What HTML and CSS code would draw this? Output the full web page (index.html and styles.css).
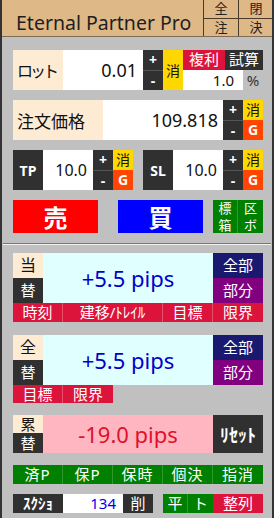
FILE: index.html
```html
<!DOCTYPE html>
<html lang="ja">
  <head>
    <meta charset="UTF-8" />
    <meta name="viewport" content="width=device-width, initial-scale=1.0" />
    <title>Eternal Partner Pro</title>
    <link rel="stylesheet" href="styles.css">
  </head>
  <body>
    <div class="panel">
      <!-- タイトル -->
      <div class="head">
        <div class="head_title">Eternal Partner Pro</div>
        <div class="head_menu">
          <span>全</span><span>閉</span><span>注</span><span>決</span>
        </div>
      </div>

      <!-- ロット -->
      <div class="row row_lot">
        <div class="label lot_label">ロット</div>
        <div class="value lot_value">0.01</div>
        <div class="pm"><span>+</span><span>-</span></div>
        <div class="clear_tall">消</div>
        <div class="lot_side">
          <div class="lot_side_top"><span class="btn_crimson">複利</span><span class="btn_dark">試算</span></div>
          <div class="lot_side_bottom"><span class="rate">1.0</span><span class="pct">%</span></div>
        </div>
      </div>

      <!-- 注文価格 -->
      <div class="row">
        <div class="label price_label">注文価格</div>
        <div class="value price_value">109.818</div>
        <div class="pm"><span>+</span><span>-</span></div>
        <div class="cg"><span class="c">消</span><span class="g">G</span></div>
      </div>

      <!-- TP / SL -->
      <div class="row row_tpsl">
        <div class="tpsl">
          <div class="tpsl_label">TP</div>
          <div class="value tpsl_value">10.0</div>
          <div class="pm"><span>+</span><span>-</span></div>
          <div class="cg"><span class="c">消</span><span class="g">G</span></div>
        </div>
        <div class="tpsl">
          <div class="tpsl_label">SL</div>
          <div class="value tpsl_value">10.0</div>
          <div class="pm"><span>+</span><span>-</span></div>
          <div class="cg"><span class="c">消</span><span class="g">G</span></div>
        </div>
      </div>

      <!-- 売買 -->
      <div class="row row_order">
        <div class="btn_sell">売</div>
        <div class="btn_buy">買</div>
        <div class="order_grid">
          <span>標</span><span>区</span><span>箱</span><span>ボ</span>
        </div>
      </div>

      <div class="divider"></div>

      <!-- 当 -->
      <div class="section sec_now">
        <div class="box">
          <div class="side"><span class="side_top">当</span><span class="side_bottom">替</span></div>
          <div class="pips pips_plus">+5.5 pips</div>
          <div class="close_col"><span class="all">全部</span><span class="part">部分</span></div>
        </div>
        <div class="red_row">
          <span class="w50">時刻</span><span class="w100">建移/ﾄﾚｲﾙ</span><span class="w50">目標</span><span class="w50">限界</span>
        </div>
      </div>

      <!-- 全 -->
      <div class="section sec_all">
        <div class="box">
          <div class="side"><span class="side_top">全</span><span class="side_bottom">替</span></div>
          <div class="pips pips_plus">+5.5 pips</div>
          <div class="close_col"><span class="all">全部</span><span class="part">部分</span></div>
        </div>
        <div class="red_row red_row_short">
          <span class="w50">目標</span><span class="w50">限界</span>
        </div>
      </div>

      <!-- 累 -->
      <div class="section sec_total">
        <div class="box box_total">
          <div class="side"><span class="side_top">累</span><span class="side_bottom">替</span></div>
          <div class="pips pips_minus">-19.0 pips</div>
          <div class="btn_reset">ﾘｾｯﾄ</div>
        </div>
      </div>

      <div class="green_row">
        <span>済P</span><span>保P</span><span>保時</span><span>個決</span><span>指消</span>
      </div>

      <div class="bottom_row">
        <span class="btn_dark shot">ｽｸｼｮ</span>
        <span class="shot_value">134</span>
        <span class="btn_dark del">削</span>
        <span class="green_btn flat">平</span>
        <span class="green_btn flat">ト</span>
        <span class="btn_crimson sort">整列</span>
      </div>
    </div>
  </body>
</html>
```

FILE: styles.css
```css
* {
  box-sizing: border-box;
}
body {
  margin: 0;
  font-family: "Noto Sans", "Noto Sans CJK JP", sans-serif;
}
span {
  display: block;
}

.panel {
  width: 274px;
  height: 518px;
  background: #c0c0c0;
  border-left: 2px solid #333;
  border-right: 2px solid #333;
  overflow: hidden;
}

/* タイトル */
.head {
  display: flex;
  height: 37px;
  background: #deb887;
  border-bottom: 1px solid #7d6c58;
}
.head_title {
  flex: 1;
  display: flex;
  align-items: center;
  padding: 8px 0 0 14px;
  font-size: 19.5px;
  color: #1e1e1e;
}
.head_menu {
  width: 69px;
  display: grid;
  grid-template-columns: 35px 34px;
  grid-template-rows: 19px 17px;
  border-left: 1px solid #4a3a2a;
}
.head_menu span {
  font-size: 13px;
  line-height: 17px;
  text-align: center;
  color: #222;
}
.head_menu span:nth-child(odd) {
  border-right: 1px solid #4a3a2a;
}
.head_menu span:nth-child(-n+2) {
  border-bottom: 1px solid #4a3a2a;
}

/* 共通の行 */
.row {
  display: flex;
  height: 40px;
  margin: 10px 0 0 11px;
  width: 250px;
}
.row_lot {
  margin-top: 13px;
}
.label {
  display: flex;
  align-items: center;
  padding-left: 4px;
  background: #fdebd3;
  color: #111;
}
.lot_label {
  width: 50px;
  font-size: 16px;
  letter-spacing: -3px;
}
.price_label {
  width: 90px;
  font-size: 17px;
}
.value {
  display: flex;
  align-items: center;
  justify-content: flex-end;
  background: #fff;
  color: #111;
}
.lot_value {
  width: 80px;
  padding-right: 6px;
  font-size: 18px;
}
.price_value {
  width: 120px;
  padding-right: 5px;
  font-size: 18px;
}

.pm {
  width: 20px;
  background: #303030;
}
.pm span {
  height: 20px;
  line-height: 19px;
  text-align: center;
  color: #fff;
  font-size: 14px;
  font-weight: bold;
}
.pm span + span {
  border-top: 1px solid #555;
}
.clear_tall {
  width: 20px;
  background: #ffd700;
  display: flex;
  align-items: center;
  justify-content: center;
  font-size: 14px;
  color: #111;
}
.cg {
  width: 20px;
}
.cg span {
  height: 20px;
  line-height: 20px;
  text-align: center;
  font-size: 14px;
}
.cg .c {
  background: #ffd700;
  color: #111;
}
.cg .g {
  background: #ff4500;
  color: #fff;
  font-weight: bold;
}

.lot_side {
  width: 80px;
}
.lot_side_top,
.lot_side_bottom {
  display: flex;
  height: 20px;
}
.btn_crimson {
  background: #dc143c;
  color: #fff;
  text-align: center;
}
.btn_dark {
  background: #303030;
  color: #fff;
  text-align: center;
}
.lot_side_top span {
  font-size: 15px;
  line-height: 19px;
}
.lot_side_top .btn_crimson {
  width: 42px;
}
.lot_side_top .btn_dark {
  width: 38px;
}
.rate {
  width: 60px;
  background: #fff;
  text-align: right;
  padding-right: 9px;
  font-size: 15px;
  line-height: 20px;
  color: #111;
}
.pct {
  width: 20px;
  text-align: center;
  font-size: 15px;
  line-height: 20px;
  color: #333;
}

/* TP SL */
.row_tpsl {
  gap: 10px;
}
.tpsl {
  display: flex;
  width: 120px;
}
.tpsl_label {
  width: 30px;
  background: #303030;
  color: #fff;
  font-size: 14px;
  font-weight: bold;
  display: flex;
  align-items: center;
  justify-content: center;
}
.tpsl_value {
  width: 50px;
  padding-right: 6px;
  font-size: 16px;
}

/* 売買 */
.row_order {
  height: 33px;
}
.btn_sell,
.btn_buy {
  width: 85px;
  display: flex;
  align-items: center;
  justify-content: center;
  color: #fff;
  font-size: 24px;
  font-weight: bold;
}
.btn_sell {
  background: #ff0000;
}
.btn_buy {
  background: #0000ff;
  margin-left: 20px;
}
.order_grid {
  width: 50px;
  margin-left: 10px;
  display: grid;
  grid-template-columns: 1fr 1fr;
  grid-template-rows: 17px 16px;
  background: #008000;
}
.order_grid span {
  font-size: 13px;
  line-height: 16px;
  text-align: center;
  color: #fff;
}
.order_grid span:nth-child(odd) {
  border-right: 1px solid #2e9a2e;
}

.divider {
  margin: 10px 1px 0;
  height: 2px;
  border-top: 1px solid #777;
  border-bottom: 1px solid #f2f2f2;
}

/* 損益 */
.section {
  margin-left: 11px;
  width: 250px;
}
.sec_now {
  margin-top: 8px;
}
.sec_all {
  margin-top: 13px;
}
.sec_total {
  margin-top: 12px;
}
.box {
  display: flex;
  height: 50px;
}
.side {
  width: 30px;
}
.side span {
  text-align: center;
}
.side_top {
  height: 25px;
  line-height: 25px;
  background: #fdebd3;
  color: #111;
  font-size: 16px;
}
.side_bottom {
  height: 25px;
  line-height: 25px;
  background: #303030;
  color: #fff;
  font-size: 15px;
}
.pips {
  width: 170px;
  display: flex;
  align-items: center;
  justify-content: center;
  font-size: 22px;
}
.pips_plus {
  background: #e0ffff;
  color: #0000cd;
}
.pips_minus {
  background: #ffb6c1;
  color: #e0102a;
}
.close_col {
  width: 50px;
}
.close_col span {
  height: 25px;
  line-height: 25px;
  text-align: center;
  color: #fff;
  font-size: 15px;
}
.close_col .all {
  background: #191970;
}
.close_col .part {
  background: #800080;
}

.red_row {
  display: flex;
  height: 19px;
}
.red_row_short {
  height: 18px;
}
.red_row span {
  background: #dc143c;
  color: #fff;
  font-size: 15px;
  line-height: 18px;
  text-align: center;
  border-right: 1px solid #e8506a;
}
.red_row span:last-child {
  border-right: none;
}
.w50 {
  width: 50px;
}
.w100 {
  width: 100px;
}

.box_total {
  height: 38px;
}
.box_total .side_top {
  height: 18px;
  line-height: 18px;
  font-size: 15px;
}
.box_total .side_bottom {
  height: 20px;
  line-height: 20px;
}
.btn_reset {
  width: 50px;
  background: #303030;
  color: #fff;
  font-size: 18px;
  font-weight: bold;
  display: flex;
  align-items: center;
  justify-content: center;
}

/* 下のボタン */
.green_row {
  display: flex;
  margin: 12px 0 0 11px;
  width: 250px;
  height: 19px;
}
.green_row span {
  width: 50px;
  background: #008000;
  color: #fff;
  font-size: 15px;
  line-height: 19px;
  text-align: center;
  letter-spacing: 1px;
  border-right: 1px solid #2e9a2e;
}
.green_row span:last-child {
  border-right: none;
}

.bottom_row {
  display: flex;
  margin: 10px 0 0 11px;
  width: 250px;
  height: 19px;
}
.bottom_row span {
  line-height: 19px;
}
.shot {
  width: 50px;
  font-size: 15px;
  font-weight: bold;
}
.shot_value {
  width: 60px;
  background: #fff;
  color: #0000ee;
  text-align: right;
  padding-right: 7px;
  font-size: 15px;
}
.del {
  width: 30px;
  font-size: 15px;
}
.green_btn {
  background: #008000;
  color: #fff;
  text-align: center;
  font-size: 15px;
}
.flat {
  width: 25px;
}
.del + .flat {
  margin-left: 10px;
  border-right: 1px solid #2e9a2e;
}
.sort {
  width: 50px;
  font-size: 15px;
}
```
